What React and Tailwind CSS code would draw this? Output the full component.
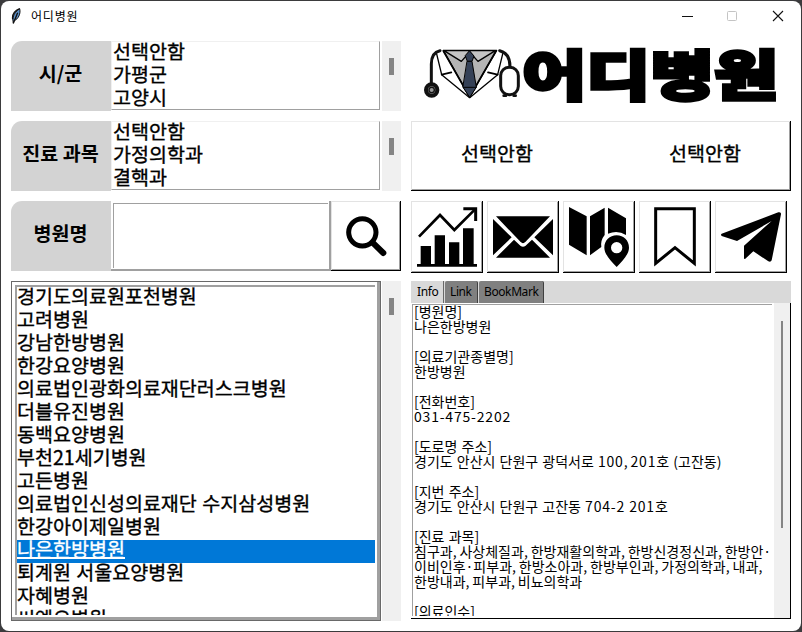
import React from "react";

const REGIONS = ["선택안함", "가평군", "고양시"];
const SUBJECTS = ["선택안함", "가정의학과", "결핵과"];
const HOSPITALS = [
  "경기도의료원포천병원",
  "고려병원",
  "강남한방병원",
  "한강요양병원",
  "의료법인광화의료재단러스크병원",
  "더블유진병원",
  "동백요양병원",
  "부천21세기병원",
  "고든병원",
  "의료법인신성의료재단 수지삼성병원",
  "한강아이제일병원",
  "나은한방병원",
  "퇴계원 서울요양병원",
  "자혜병원",
  "씨엠요병원",
];
const SELECTED = "나은한방병원";
const INFO = [
  "[병원명]",
  "나은한방병원",
  "",
  "[의료기관종별명]",
  "한방병원",
  "",
  "[전화번호]",
  "031-475-2202",
  "",
  "[도로명 주소]",
  "경기도 안산시 단원구 광덕서로 100, 201호 (고잔동)",
  "",
  "[지번 주소]",
  "경기도 안산시 단원구 고잔동 704-2 201호",
  "",
  "[진료 과목]",
  "침구과, 사상체질과, 한방재활의학과, 한방신경정신과, 한방안·",
  "이비인후·피부과, 한방소아과, 한방부인과, 가정의학과, 내과,",
  "한방내과, 피부과, 비뇨의학과",
  "",
  "[의료인수]",
];

const RAISED =
  "bg-white shadow-[inset_-1px_-1px_0_#000,inset_1px_1px_0_#e3e3e3,inset_-2px_-2px_0_#a0a0a0]";
const LIST_TEXT =
  "h-[23px] text-[19.56px] leading-[23px] font-normal whitespace-pre [-webkit-text-stroke:0.35px] [word-spacing:1px]";

function Label({ children }) {
  return (
    <div className="flex h-[70px] w-[100px] shrink-0 items-center justify-center rounded-tl-[11px] bg-[#d3d3d3] pr-px pb-1.5 text-[19.56px] font-bold whitespace-pre">
      {children}
    </div>
  );
}

function Scrollbar() {
  return (
    <div className="ml-px w-[19px] shrink-0 bg-[#f0f0f0] pt-[17px] pl-[7px]">
      <div className="h-[17px] w-[5px] bg-[#858585]" />
    </div>
  );
}

function PickList({ label, items }) {
  return (
    <div className="flex h-[70px]">
      <Label>{label}</Label>
      <div className="mr-px h-[69px] w-[269px] overflow-hidden border border-t-[#f0f0f0] border-r-[#a0a0a0] border-b-[#a0a0a0] border-l-[#f0f0f0] pl-px">
        <div className="-mt-[3px]">
          {items.map((t) => (
            <div key={t} className={LIST_TEXT}>
              {t}
            </div>
          ))}
        </div>
      </div>
      <Scrollbar />
    </div>
  );
}

function Raised({ children }) {
  return (
    <button className={"block h-[72px] w-[72px] shrink-0 " + RAISED}>
      <svg viewBox="0 0 216 216" className="block h-[72px] w-[72px]">
        {children}
      </svg>
    </button>
  );
}

function Logo() {
  return (
    <svg viewBox="33 33 1140 210" className="block h-[70px] w-[380px]">
      <g strokeLinejoin="round" strokeLinecap="round">
        <path d="M130 61H290L209 201Z" fill="#b4b4b4" stroke="#000" strokeWidth="4" />
        <path d="M109 68L125 134L209 203L293 134L309 68" fill="none" stroke="#000" strokeWidth="4" />
        <path d="M125 134L154 127M293 134L264 127M130 63L209 201L288 63" fill="none" stroke="#000" strokeWidth="5" />
        <path d="M132 62L184 94L209 66L234 94L286 62Z" fill="#c4c4c4" stroke="#000" strokeWidth="4" />
        <path d="M209 63L222 78L216 94H202L196 78Z" fill="#354157" stroke="#000" strokeWidth="3" />
        <path d="M202 94H216L229 172L209 202L189 172Z" fill="#354157" stroke="#000" strokeWidth="3" />
        <path d="M190 172H228" stroke="#000" strokeWidth="3" />
        <path d="M120 62C101 66 94 82 94 102V166M299 62C320 67 330 84 330 110" fill="none" stroke="#111" strokeWidth="9" />
        <circle cx="95" cy="180" r="17" fill="#888" stroke="#111" strokeWidth="12" />
        <circle cx="95" cy="180" r="8" fill="#999" stroke="#111" strokeWidth="4" />
        <rect x="302" y="112" width="53" height="82" rx="25" fill="none" stroke="#111" strokeWidth="9" />
        <path d="M311 197H318M341 197H347" stroke="#111" strokeWidth="8" />
      </g>
      <text
        x="367"
        y="197"
        textLength="768"
        lengthAdjust="spacingAndGlyphs"
        fontSize="162"
        fontWeight="900"
        fill="#000"
        stroke="#000"
        strokeWidth="10"
      >
        어디병원
      </text>
    </svg>
  );
}

function InfoLine({ text }) {
  const parts = text.split(/([0-9][0-9-]*|,)/);
  return (
    <div className="h-[15px]">
      {parts.map((p, i) => {
        if (p === ",") {
          return (
            <span key={i} className="tracking-[-1.2px]">
              ,
            </span>
          );
        }
        return i % 2 ? (
          <span key={i} className="tracking-[0.8px]">
            {p}
          </span>
        ) : (
          p
        );
      })}
    </div>
  );
}

export default function App() {
  return (
    <div className="h-[632px] w-[802px] overflow-hidden bg-[#3b3b3d] px-px pt-px pb-px font-['Noto_Sans_CJK_KR',sans-serif] text-black">
      <div className="flex h-[630px] w-[800px] flex-col rounded-lg bg-white">
        <header className="flex h-[30px] shrink-0 items-center pl-[10px]">
          <svg viewBox="0 0 30 48" className="h-4 w-[10px]">
            <path d="M7 46C4 32 5 16 26 2C30 16 22 34 9 38Z" fill="#5b8fc7" stroke="#111" strokeWidth="3" />
            <path d="M7 46L20 14M5 34C3 20 12 8 26 2" stroke="#111" strokeWidth="4" fill="none" />
          </svg>
          <span className="ml-[10px] text-[12px] leading-[14px] font-normal tracking-[0.8px]">어디병원</span>
          <svg viewBox="0 0 110 12" className="mr-[14px] ml-auto h-3 w-[110px]" fill="none" stroke="#111">
            <path d="M5 6.5H16" />
            <rect x="50.5" y="1.5" width="9" height="9" rx="1" stroke="#c4c4c4" />
            <path d="M96 1L106 11M106 1L96 11" strokeWidth="1.1" />
          </svg>
        </header>

        <main className="flex gap-[10px] pt-[10px] pl-[10px]">
          <section className="flex w-[390px] flex-col gap-[10px]">
            <PickList label="시/군" items={REGIONS} />
            <PickList label="진료 과목" items={SUBJECTS} />

            <div className="flex h-[70px]">
              <Label>병원명</Label>
              <div className="w-[220px] border-r-2 border-b-2 border-[#a0a0a0] pt-[2px] pl-[2px]">
                <div className="h-[65px] w-[215px] border-t border-l border-[#a0a0a0]" />
              </div>
              <button className={"flex h-[70px] w-[70px] items-center justify-center " + RAISED}>
                <svg viewBox="0 0 210 210" className="block h-[70px] w-[70px]" fill="none" stroke="#000">
                  <circle cx="94" cy="94" r="41" strokeWidth="15" />
                  <path d="M125 125L157 156" strokeWidth="18" strokeLinecap="round" />
                </svg>
              </button>
            </div>

            <div className="flex h-[340px]">
              <div className="h-[340px] w-[370px] border border-[#696969] bg-white">
                <div className="h-[338px] w-[368px] border-r-[3px] border-b-[3px] border-[#a0a0a0] pt-[3px] pl-[3px]">
                  <div className="h-[330px] w-[360px] overflow-hidden border-t-2 border-l-2 border-[#a0a0a0]">
                    {HOSPITALS.map((name) => (
                      <div
                        key={name}
                        className={LIST_TEXT + (name === SELECTED ? " bg-[#0078d7] text-white" : "")}
                      >
                        <span
                          className={
                            name === SELECTED
                              ? "relative -top-[3px] inline-block h-[22px] border-b-2 border-white"
                              : "relative -top-[3px]"
                          }
                        >
                          {name}
                        </span>
                      </div>
                    ))}
                  </div>
                </div>
              </div>
              <Scrollbar />
            </div>
          </section>

          <section className="flex w-[380px] flex-col">
            <Logo />
            <div
              className={
                "mt-[10px] flex h-[70px] items-center pb-1.5 pl-[50px] text-[19.56px] [-webkit-text-stroke:0.35px] " +
                RAISED
              }
            >
              <span>선택안함</span>
              <span className="ml-[136px]">선택안함</span>
            </div>

            <div className="mt-[10px] flex gap-1">
              <Raised>
                <path d="M18 189H198V197H18Z" />
                <path d="M29 135H60V192H29ZM71 103H102V192H71ZM114 124H145V192H114ZM156 82H188V192H156Z" />
                <path d="M24 107L87 42L130 87L192 25" fill="none" stroke="#000" strokeWidth="8" />
                <path d="M157 23H194V60" fill="none" stroke="#000" strokeWidth="9" />
              </Raised>
              <Raised>
                <path d="M27 46H189L115 123Q108 130 101 123ZM18 54L74 109L18 163ZM198 54L142 109L198 163ZM81 116L101 135Q108 140 115 135L135 116L189 170H27Z" />
              </Raised>
              <Raised>
                <path d="M18 18L71 46V163L18 131ZM81 46L125 20V102Q112 118 115 138L81 163ZM135 20L189 52V102Q164 86 135 98Z" />
                <path
                  fillRule="evenodd"
                  d="M161 103C182 103 198 119 198 140C198 159 180 178 161 198C142 178 124 159 124 140C124 119 140 103 161 103ZM161 123A17 17 0 1 0 161 157A17 17 0 1 0 161 123Z"
                />
              </Raised>
              <Raised>
                <path d="M50 23H166V187L108 140L50 187Z" fill="none" stroke="#000" strokeWidth="9" />
              </Raised>
              <Raised>
                <path d="M20 98L190 34Q199 32 198 40L170 178Q167 185 160 181L115 151L91 173Q87 176 87 170V134L170 60L66 120L20 105Q16 101 20 98Z" />
              </Raised>
            </div>

            <div className="mt-2 flex h-[22px] bg-[#d9d9d9] pl-px font-['Noto_Sans',sans-serif] text-[12px] leading-[22px] tracking-[-0.4px]">
              <div className="w-8 border-r border-[#696969] pl-[5px]">Info</div>
              <div className="ml-px w-[33px] rounded-t-[2px] border-r border-[#404040] bg-[#808080] pl-[5px]">Link</div>
              <div className="ml-px w-[65px] rounded-t-[2px] border-r border-[#404040] bg-[#808080] pl-[5px]">
                BookMark
              </div>
            </div>
            <div className="flex h-[316px] border-r border-b border-black">
              <div className="mt-px ml-px h-[312px] w-[360px] overflow-hidden border-t border-l border-[#a0a0a0] pl-px text-[14px] leading-[15px] whitespace-pre [word-spacing:1px]">
                <div className="-mt-px">
                  {INFO.map((t, i) => (
                    <InfoLine key={i} text={t} />
                  ))}
                </div>
              </div>
              <div className="ml-[2px] w-4 bg-[#f0f0f0] pt-[18px] pl-[7px]">
                <div className="h-[207px] w-[2px] bg-[#858585]" />
              </div>
            </div>
          </section>
        </main>
      </div>
    </div>
  );
}
